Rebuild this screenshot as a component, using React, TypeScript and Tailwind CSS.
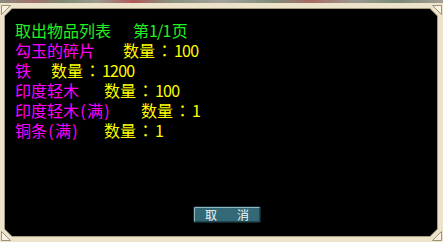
import React from 'react';

interface Row {
  name: string;
  nameWidth: number;
  label: string;
  value: string;
  suffix?: string;
  nameColor: string;
  valueColor: string;
}

const rows: Row[] = [
  { name: '取出物品列表', nameWidth: 118, label: '第', value: '1/1', suffix: '页', nameColor: 'text-[#22f022]', valueColor: 'text-[#22f022]' },
  { name: '勾玉的碎片', nameWidth: 108, label: '数量', value: '100', nameColor: 'text-[#ff00ff]', valueColor: 'text-[#ffff00]' },
  { name: '铁', nameWidth: 36, label: '数量', value: '1200', nameColor: 'text-[#ff00ff]', valueColor: 'text-[#ffff00]' },
  { name: '印度轻木', nameWidth: 89, label: '数量', value: '100', nameColor: 'text-[#ff00ff]', valueColor: 'text-[#ffff00]' },
  { name: '印度轻木(满)', nameWidth: 126, label: '数量', value: '1', nameColor: 'text-[#ff00ff]', valueColor: 'text-[#ffff00]' },
  { name: '铜条(满)', nameWidth: 89, label: '数量', value: '1', nameColor: 'text-[#ff00ff]', valueColor: 'text-[#ffff00]' },
];

// half-width brackets take 8px like the game's bitmap font
const renderName = (name: string) =>
  name.split(/([()])/).filter(Boolean).map((part, i) =>
    part === '(' || part === ')' ? (
      <span key={i} className="inline-block w-[8px] text-center">{part}</span>
    ) : (
      <span key={i}>{part}</span>
    )
  );

const Corner: React.FC<{ className: string; points: string }> = ({ className, points }) => (
  <svg className={`absolute ${className}`} width="10" height="10" viewBox="0 0 10 10">
    <polygon points={points} fill="#f7f2e4" stroke="#9c9278" strokeWidth="1" />
  </svg>
);

const App: React.FC = () => {
  return (
    <div className="relative w-[443px] h-[242px] bg-[#ece3ca] flex flex-col overflow-hidden font-['Noto_Sans_CJK_SC','Noto_Sans',sans-serif]">
      {/* strip of game scene above the window */}
      <div className="h-[3px] bg-[linear-gradient(to_right,#8d8a80,#a0706a_8%,#7c8a70_14%,#9a9a92_22%,#b05858_30%,#88907c_38%,#a2a29a_50%,#7e8c78_62%,#a86a62_70%,#9a9890_80%,#7a8a74_90%,#a49e94)]" />
      <div className="flex-1 pt-[5px] pl-[4px] pr-[5px] pb-[5px] flex">
        <div className="flex-1 bg-[#a89c80] p-px [clip-path:polygon(8px_0,calc(100%_-_8px)_0,100%_8px,100%_calc(100%_-_8px),calc(100%_-_8px)_100%,8px_100%,0_calc(100%_-_8px),0_8px)]">
          <div className="h-full bg-black flex flex-col pt-[11px] pl-[10px] pb-[13px] [clip-path:polygon(7px_0,calc(100%_-_7px)_0,100%_7px,100%_calc(100%_-_7px),calc(100%_-_7px)_100%,7px_100%,0_calc(100%_-_7px),0_7px)]">
            <div className="flex flex-col text-[16px] leading-[20px]">
              {rows.map((r, i) => (
                <div key={i} className="flex items-baseline whitespace-pre">
                  <span className={`${r.nameColor} inline-block`} style={{ width: r.nameWidth }}>{renderName(r.name)}</span>
                  <span className={r.valueColor}>{r.label}</span>
                  {!r.suffix && (
                    <span className={`${r.valueColor} inline-block w-[19px] text-center font-['Noto_Sans_CJK_JP',sans-serif]`}>：</span>
                  )}
                  <span className={`${r.valueColor} tracking-[-0.8px]`}>{r.value}</span>
                  {r.suffix && <span className={`${r.valueColor} ml-[1px]`}>{r.suffix}</span>}
                </div>
              ))}
            </div>
            <div className="mt-auto flex justify-center pl-[2px]">
              <button className="w-[68px] h-[17px] rounded-[2px] border border-[#14282e] bg-[#336876] shadow-[inset_1px_1px_0_#8fb8c2,inset_-1px_-1px_0_#1f4650] flex items-center justify-center gap-[20px] text-[12px] leading-none text-[#eef6f6]">
                <span>取</span>
                <span>消</span>
              </button>
            </div>
          </div>
        </div>
      </div>
      <Corner className="left-[1px] top-[5px]" points="0.5,0.5 9.5,0.5 0.5,9.5" />
      <Corner className="right-[1px] top-[5px]" points="0.5,0.5 9.5,0.5 9.5,9.5" />
      <Corner className="left-[1px] bottom-[1px]" points="0.5,0.5 9.5,9.5 0.5,9.5" />
      <Corner className="right-[1px] bottom-[1px]" points="9.5,0.5 9.5,9.5 0.5,9.5" />
    </div>
  );
};

export default App;
